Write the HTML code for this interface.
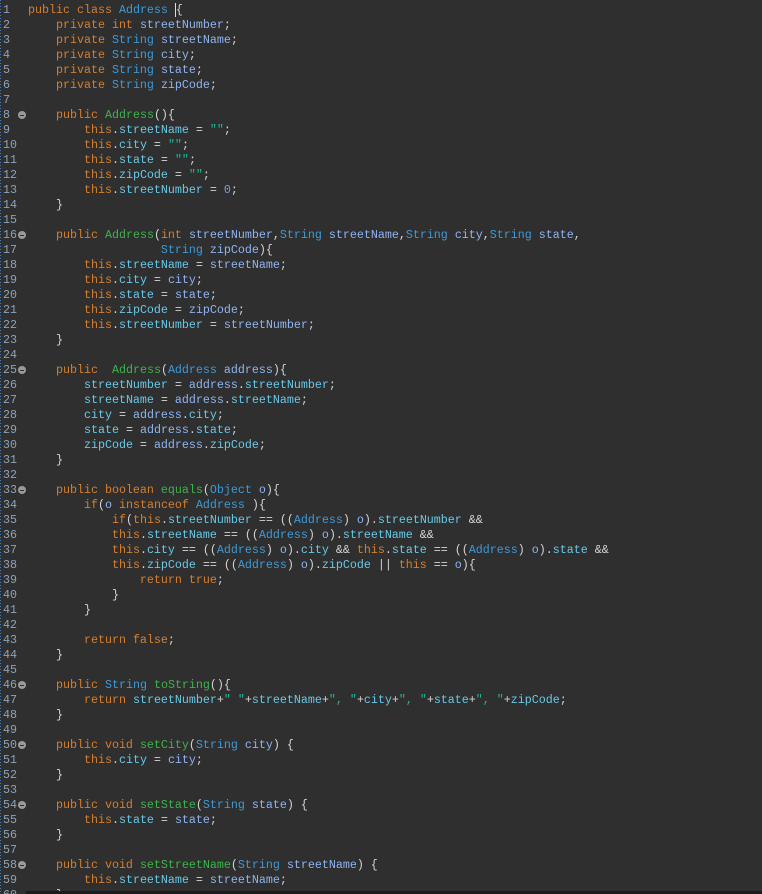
<!DOCTYPE html>
<html><head><meta charset="utf-8"><style>
html,body{margin:0;padding:0;background:#2f2f2f;width:762px;height:894px;overflow:hidden}
body{position:relative;font-family:"Liberation Mono",monospace;font-size:11.67px;color:#d4d4d4}
.g{position:absolute;left:0;top:0;width:1px;height:894px;background:repeating-linear-gradient(#3d7ec0 0 1px,transparent 1px 3px)}
.l{position:absolute;left:0;height:15px;line-height:15px;white-space:pre;width:762px;margin-top:1px}
.no{position:absolute;left:3px;color:#8fa3b5}
.c{position:absolute;left:28px}
.fold{position:absolute;left:18px;top:3px;width:8px;height:8px;border-radius:50%;background:#9a9a9a}
.fold:after{content:"";position:absolute;left:2px;top:3.5px;width:4px;height:1px;background:#2f2f2f}
.k{color:#d67f2e}.t{color:#3d9ad8}.m{color:#3cb44b}.f{color:#67c9e8}.v{color:#8fb4f2}.s{color:#1bb99b}.n{color:#7f9fc4}
.cur{border-left:1px solid #ddd}
.bot{position:absolute;left:26px;top:891px;width:736px;height:3px;background:#1c1c1c}
</style></head><body>
<div class="g"></div>
<div class="l" style="top:2px"><span class="no">1</span><span class="c"><span class="k">public class</span> <span class="t">Address</span> <span class="cur">{</span></span></div>
<div class="l" style="top:17px"><span class="no">2</span><span class="c">    <span class="k">private int</span> <span class="v">streetNumber</span>;</span></div>
<div class="l" style="top:32px"><span class="no">3</span><span class="c">    <span class="k">private</span> <span class="t">String</span> <span class="v">streetName</span>;</span></div>
<div class="l" style="top:47px"><span class="no">4</span><span class="c">    <span class="k">private</span> <span class="t">String</span> <span class="v">city</span>;</span></div>
<div class="l" style="top:62px"><span class="no">5</span><span class="c">    <span class="k">private</span> <span class="t">String</span> <span class="v">state</span>;</span></div>
<div class="l" style="top:77px"><span class="no">6</span><span class="c">    <span class="k">private</span> <span class="t">String</span> <span class="v">zipCode</span>;</span></div>
<div class="l" style="top:92px"><span class="no">7</span></div>
<div class="l" style="top:107px"><span class="no">8</span><span class="fold"></span><span class="c">    <span class="k">public</span> <span class="m">Address</span>(){</span></div>
<div class="l" style="top:122px"><span class="no">9</span><span class="c">        <span class="k">this</span>.<span class="f">streetName</span> = <span class="s">""</span>;</span></div>
<div class="l" style="top:137px"><span class="no">10</span><span class="c">        <span class="k">this</span>.<span class="f">city</span> = <span class="s">""</span>;</span></div>
<div class="l" style="top:152px"><span class="no">11</span><span class="c">        <span class="k">this</span>.<span class="f">state</span> = <span class="s">""</span>;</span></div>
<div class="l" style="top:167px"><span class="no">12</span><span class="c">        <span class="k">this</span>.<span class="f">zipCode</span> = <span class="s">""</span>;</span></div>
<div class="l" style="top:182px"><span class="no">13</span><span class="c">        <span class="k">this</span>.<span class="f">streetNumber</span> = <span class="n">0</span>;</span></div>
<div class="l" style="top:197px"><span class="no">14</span><span class="c">    }</span></div>
<div class="l" style="top:212px"><span class="no">15</span></div>
<div class="l" style="top:227px"><span class="no">16</span><span class="fold"></span><span class="c">    <span class="k">public</span> <span class="m">Address</span>(<span class="k">int</span> <span class="v">streetNumber</span>,<span class="t">String</span> <span class="v">streetName</span>,<span class="t">String</span> <span class="v">city</span>,<span class="t">String</span> <span class="v">state</span>,</span></div>
<div class="l" style="top:242px"><span class="no">17</span><span class="c">                   <span class="t">String</span> <span class="v">zipCode</span>){</span></div>
<div class="l" style="top:257px"><span class="no">18</span><span class="c">        <span class="k">this</span>.<span class="f">streetName</span> = <span class="v">streetName</span>;</span></div>
<div class="l" style="top:272px"><span class="no">19</span><span class="c">        <span class="k">this</span>.<span class="f">city</span> = <span class="v">city</span>;</span></div>
<div class="l" style="top:287px"><span class="no">20</span><span class="c">        <span class="k">this</span>.<span class="f">state</span> = <span class="v">state</span>;</span></div>
<div class="l" style="top:302px"><span class="no">21</span><span class="c">        <span class="k">this</span>.<span class="f">zipCode</span> = <span class="v">zipCode</span>;</span></div>
<div class="l" style="top:317px"><span class="no">22</span><span class="c">        <span class="k">this</span>.<span class="f">streetNumber</span> = <span class="v">streetNumber</span>;</span></div>
<div class="l" style="top:332px"><span class="no">23</span><span class="c">    }</span></div>
<div class="l" style="top:347px"><span class="no">24</span></div>
<div class="l" style="top:362px"><span class="no">25</span><span class="fold"></span><span class="c">    <span class="k">public</span>  <span class="m">Address</span>(<span class="t">Address</span> <span class="v">address</span>){</span></div>
<div class="l" style="top:377px"><span class="no">26</span><span class="c">        <span class="f">streetNumber</span> = <span class="v">address</span>.<span class="f">streetNumber</span>;</span></div>
<div class="l" style="top:392px"><span class="no">27</span><span class="c">        <span class="f">streetName</span> = <span class="v">address</span>.<span class="f">streetName</span>;</span></div>
<div class="l" style="top:407px"><span class="no">28</span><span class="c">        <span class="f">city</span> = <span class="v">address</span>.<span class="f">city</span>;</span></div>
<div class="l" style="top:422px"><span class="no">29</span><span class="c">        <span class="f">state</span> = <span class="v">address</span>.<span class="f">state</span>;</span></div>
<div class="l" style="top:437px"><span class="no">30</span><span class="c">        <span class="f">zipCode</span> = <span class="v">address</span>.<span class="f">zipCode</span>;</span></div>
<div class="l" style="top:452px"><span class="no">31</span><span class="c">    }</span></div>
<div class="l" style="top:467px"><span class="no">32</span></div>
<div class="l" style="top:482px"><span class="no">33</span><span class="fold"></span><span class="c">    <span class="k">public boolean</span> <span class="m">equals</span>(<span class="t">Object</span> <span class="v">o</span>){</span></div>
<div class="l" style="top:497px"><span class="no">34</span><span class="c">        <span class="k">if</span>(<span class="v">o</span> <span class="k">instanceof</span> <span class="t">Address</span> ){</span></div>
<div class="l" style="top:512px"><span class="no">35</span><span class="c">            <span class="k">if</span>(<span class="k">this</span>.<span class="f">streetNumber</span> == ((<span class="t">Address</span>) <span class="v">o</span>).<span class="f">streetNumber</span> &amp;&amp;</span></div>
<div class="l" style="top:527px"><span class="no">36</span><span class="c">            <span class="k">this</span>.<span class="f">streetName</span> == ((<span class="t">Address</span>) <span class="v">o</span>).<span class="f">streetName</span> &amp;&amp;</span></div>
<div class="l" style="top:542px"><span class="no">37</span><span class="c">            <span class="k">this</span>.<span class="f">city</span> == ((<span class="t">Address</span>) <span class="v">o</span>).<span class="f">city</span> &amp;&amp; <span class="k">this</span>.<span class="f">state</span> == ((<span class="t">Address</span>) <span class="v">o</span>).<span class="f">state</span> &amp;&amp;</span></div>
<div class="l" style="top:557px"><span class="no">38</span><span class="c">            <span class="k">this</span>.<span class="f">zipCode</span> == ((<span class="t">Address</span>) <span class="v">o</span>).<span class="f">zipCode</span> || <span class="k">this</span> == <span class="v">o</span>){</span></div>
<div class="l" style="top:572px"><span class="no">39</span><span class="c">                <span class="k">return true</span>;</span></div>
<div class="l" style="top:587px"><span class="no">40</span><span class="c">            }</span></div>
<div class="l" style="top:602px"><span class="no">41</span><span class="c">        }</span></div>
<div class="l" style="top:617px"><span class="no">42</span></div>
<div class="l" style="top:632px"><span class="no">43</span><span class="c">        <span class="k">return false</span>;</span></div>
<div class="l" style="top:647px"><span class="no">44</span><span class="c">    }</span></div>
<div class="l" style="top:662px"><span class="no">45</span></div>
<div class="l" style="top:677px"><span class="no">46</span><span class="fold"></span><span class="c">    <span class="k">public</span> <span class="t">String</span> <span class="m">toString</span>(){</span></div>
<div class="l" style="top:692px"><span class="no">47</span><span class="c">        <span class="k">return</span> <span class="f">streetNumber</span>+<span class="s">" "</span>+<span class="f">streetName</span>+<span class="s">", "</span>+<span class="f">city</span>+<span class="s">", "</span>+<span class="f">state</span>+<span class="s">", "</span>+<span class="f">zipCode</span>;</span></div>
<div class="l" style="top:707px"><span class="no">48</span><span class="c">    }</span></div>
<div class="l" style="top:722px"><span class="no">49</span></div>
<div class="l" style="top:737px"><span class="no">50</span><span class="fold"></span><span class="c">    <span class="k">public void</span> <span class="m">setCity</span>(<span class="t">String</span> <span class="v">city</span>) {</span></div>
<div class="l" style="top:752px"><span class="no">51</span><span class="c">        <span class="k">this</span>.<span class="f">city</span> = <span class="v">city</span>;</span></div>
<div class="l" style="top:767px"><span class="no">52</span><span class="c">    }</span></div>
<div class="l" style="top:782px"><span class="no">53</span></div>
<div class="l" style="top:797px"><span class="no">54</span><span class="fold"></span><span class="c">    <span class="k">public void</span> <span class="m">setState</span>(<span class="t">String</span> <span class="v">state</span>) {</span></div>
<div class="l" style="top:812px"><span class="no">55</span><span class="c">        <span class="k">this</span>.<span class="f">state</span> = <span class="v">state</span>;</span></div>
<div class="l" style="top:827px"><span class="no">56</span><span class="c">    }</span></div>
<div class="l" style="top:842px"><span class="no">57</span></div>
<div class="l" style="top:857px"><span class="no">58</span><span class="fold"></span><span class="c">    <span class="k">public void</span> <span class="m">setStreetName</span>(<span class="t">String</span> <span class="v">streetName</span>) {</span></div>
<div class="l" style="top:872px"><span class="no">59</span><span class="c">        <span class="k">this</span>.<span class="f">streetName</span> = <span class="v">streetName</span>;</span></div>
<div class="l" style="top:887px"><span class="no">60</span><span class="c">    }</span></div>
<div class="bot"></div>
</body></html>
